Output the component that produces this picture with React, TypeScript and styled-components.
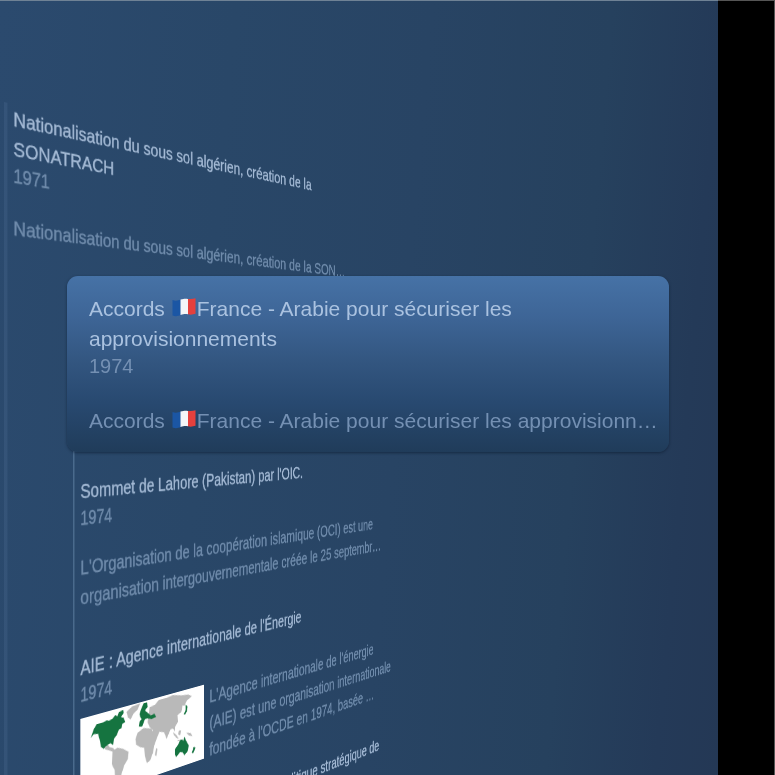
import React from "react";
import styled, { createGlobalStyle } from "styled-components";

const Global = createGlobalStyle`
  * { box-sizing: border-box; }
  body {
    margin: 0;
    background: #000;
    font-family: "Liberation Sans", Arial, sans-serif;
    overflow: hidden;
  }
  h2, p { margin: 0; font-weight: 400; }
`;

const Screen = styled.main`
  display: grid;
  grid-template-columns: 1fr 57px;
  height: 100vh;
  overflow: hidden;
  background: #000;
`;

const Stage = styled.div`
  display: grid;
  grid-template: 100vh / 100%;
  overflow: hidden;
  border-top: 1px solid #6f8295;
  background: linear-gradient(95deg, #2b4a6e 0%, #294768 30%, #284464 55%, #26415e 78%, #243a58 92%, #243855 100%);
`;

const Side = styled.div`
  border-top: 1px solid #555;
  border-right: 1px solid #555;
`;

/* A timeline column turned away from the viewer around its left edge. */
const Plane = styled.section<{ $inset: number; $top: number; $depth: number; $angle: number }>`
  grid-area: 1 / 1;
  width: 700px;
  height: 100%;
  margin-left: ${(p) => p.$inset}px;
  padding-top: ${(p) => p.$top}px;
  transform-origin: left center;
  transform: perspective(${(p) => p.$depth}px) rotateY(${(p) => p.$angle}deg);
`;

const Rail = styled.div<{ $soft?: boolean }>`
  height: 1400px;
  padding: ${(p) => (p.$soft ? "0 0 0 7px" : "36px 0 0 8px")};
  border-left: ${(p) => (p.$soft ? "4px solid rgba(120, 160, 200, 0.12)" : "2px solid rgba(130, 165, 200, 0.36)")};
`;

const Title = styled.h2`
  font-size: 21px;
  line-height: 30px;
  color: #aac2e0;
  white-space: pre;
`;

const Year = styled.p`
  font-size: 20px;
  line-height: 24px;
  color: #7490b3;
`;

const Text = styled.p`
  font-size: 21px;
  line-height: 30px;
  color: #7490b3;
  white-space: pre;
`;

const Entry = styled.article<{ $soft?: boolean }>`
  display: flex;
  flex-direction: column;
  margin-bottom: 41px;
  filter: blur(${(p) => (p.$soft ? "0.6px" : "0.5px")});
  -webkit-text-stroke: 0.4px;

  ${Title} { color: #a3b9d4; }
  ${Year}, ${Text} { color: #6f8bab; }
`;

const Body = styled.div<{ $gap: number }>`
  display: flex;
  align-items: flex-start;
  gap: 9px;
  margin-top: ${(p) => p.$gap}px;
`;

const Card = styled.article`
  grid-area: 1 / 1;
  z-index: 1;
  align-self: start;
  margin: 275px 49px 0 67px;
  padding: 18px 12px 16px 22px;
  border-radius: 11px;
  background: linear-gradient(#4672a6 0%, #3d6495 25%, #32557f 50%, #284970 72%, #203c5a 100%);
  box-shadow: 0 1px 3px rgba(10, 25, 45, 0.6);
`;

const FlagSvg = styled.svg`
  width: 24px;
  height: 19px;
  margin: 0 1px;
  vertical-align: -1px;
`;

const MapSvg = styled.svg`
  width: 188px;
  height: 83px;
  background: #fff;
  flex: none;
`;

const Flag = () => (
  <FlagSvg viewBox="0 0 24 19" role="img" aria-label="France">
    <path d="M.5 2C4 3.300 6 2.500 9 1.500V17C6 18 4 18.800 .5 17.500Z" fill="#1b56a4" />
    <path d="M8.500 1.600C12 .6 13 .5 16 .9V16.300C13 15.800 12 16 8.500 17Z" fill="#f4f5f8" />
    <path d="M16 .9C19 1.300 21 1 23.500 .3V15.800C21 16.500 19 17 16 16.300Z" fill="#e5403d" />
  </FlagSvg>
);

const WorldMap = () => (
  <MapSvg viewBox="0 0 184 82" preserveAspectRatio="none" role="img" aria-label="Pays membres de l'AIE">
    <g fill="#b9b9b9">
      <path d="M64 6l8-4 12-1-4 6-6 3-4 5-4-3z" />
      <path d="M30 31l7 2 3 4 5 2 3 4-3 0-6-3-5-2z" />
      <path d="M44 42l7-2 8 3 8 5-1 7-5 5-4 8-3 8-3 3-3-5-1-12-4-7z" />
      <path d="M80 31l9-3 12 3 4 8 5 2-5 9-2 7-4 7-5 2-3-8-1-9-6-2-6-4-1-6z" />
      <path d="M108 53l2 2-2 7-2-2z" />
      <path d="M98 8l8-1 6-4 12 0 10-1 14 3 10 1 6 3-8 3-4 5-3-1-2 7-6 2 1 7-5 5 0 5-3-4-4 0-6 9-4-8-7-2-5 7-7-7 2-4-5-4-3-6z" />
      <path d="M134 42l5 4 4 5-3-1-5-5zM143 42l4 1-2 5-3-2zM155 47l7 2 3 4-6-2zM141 52l8 1-1 1-7-1z" />
    </g>
    <g fill="#157440">
      <path d="M18 14l4-4 9 0 5-1 3 1 5-1 4-3 3 2 2-4 6-1 1 3-4 4 4 1 2 5-4 1-1 4-4 1-3 5-4 3-1 6-4-3-7 2-2 2-4-3-2-8-2-6-6-1-4 3z" />
      <path d="M83 12l2-4 4-6 5 0 1 5-4 3 4 3 5 4 5-1 3 4-7 1-6-2-4 0-4 7-5-1 1-5 3-2-2-3z" />
      <path d="M154 16l3 3-1 5-3 3-2-1 3-4z" />
      <path d="M137 61l5-4 3-4 4 0 1 2 2-4 3 5 4 6-2 6-5 3-3-4-4-1-6 4-2-3z" />
      <path d="M167 65l3 2-4 5-2-1z" />
    </g>
  </MapSvg>
);

export default function App() {
  return (
    <>
      <Global />
      <Screen>
        <Stage>
          <Plane $inset={4} $top={101} $depth={736} $angle={31}>
            <Rail $soft>
              <Entry $soft>
                <Title>{"Nationalisation du sous sol algérien, création de la\nSONATRACH"}</Title>
                <Year>1971</Year>
                <Body $gap={26}>
                  <Text>Nationalisation du sous sol algérien, création de la SON…</Text>
                </Body>
              </Entry>
            </Rail>
          </Plane>
          <Plane $inset={73} $top={440} $depth={1080} $angle={42}>
            <Rail>
              <Entry>
                <Title>Sommet de Lahore (Pakistan) par l'OIC.</Title>
                <Year>1974</Year>
                <Body $gap={23}>
                  <Text>{"L'Organisation de la coopération islamique (OCI) est une\norganisation intergouvernementale créée le 25 septembr…"}</Text>
                </Body>
              </Entry>
              <Entry>
                <Title>AIE : Agence internationale de l'Énergie</Title>
                <Year>1974</Year>
                <Body $gap={12}>
                  <WorldMap />
                  <Text>{"L'Agence internationale de l'énergie\n(AIE) est une organisation internationale\nfondée à l'OCDE en 1974, basée …"}</Text>
                </Body>
              </Entry>
              <Entry>
                <Title>Les États-Unis lancent une longue politique stratégique de</Title>
              </Entry>
            </Rail>
          </Plane>
          <Card>
            <Title>
              Accords <Flag />France - Arabie pour sécuriser les{"\n"}approvisionnements
            </Title>
            <Year>1974</Year>
            <Body $gap={28}>
              <Text>
                Accords <Flag />France - Arabie pour sécuriser les approvisionn…
              </Text>
            </Body>
          </Card>
        </Stage>
        <Side />
      </Screen>
    </>
  );
}
